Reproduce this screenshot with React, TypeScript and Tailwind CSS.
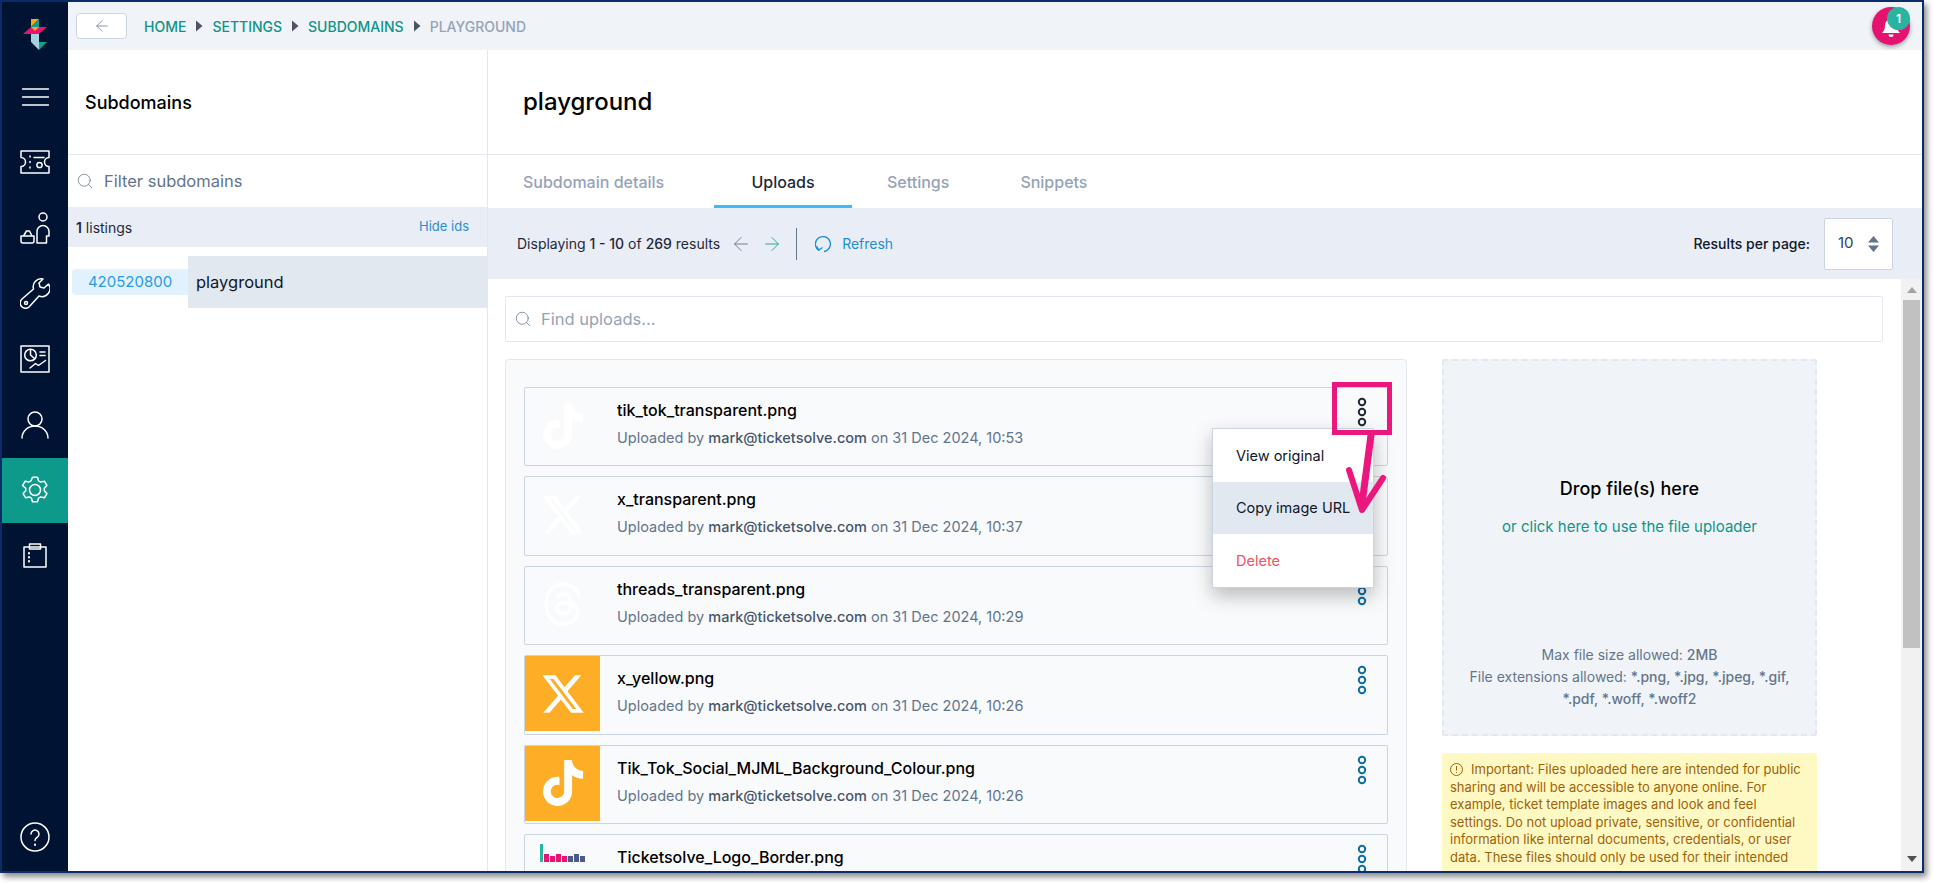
import React from "react";
import { ArrowLeft, ArrowRight, Search } from "lucide-react";
import { FaTiktok, FaXTwitter, FaThreads } from "react-icons/fa6";

const Logo = () => (
  <svg width="24" height="31" viewBox="0 0 24 31">
    <polygon points="8,0 16,0 8,8" fill="#f5a623" />
    <polygon points="16,0 16,8 8,8" fill="#12a08c" />
    <polygon points="0,15 8,8 24,8 16,15" fill="#e8146f" />
    <polygon points="8,8 16,8 12,12" fill="#f5a623" />
    <rect x="8" y="15" width="8" height="8" fill="#a9d0e0" />
    <polygon points="8,23 16,23 16,31" fill="#a9d0e0" />
    <polygon points="16,23 24,23 16,31" fill="#12a08c" />
  </svg>
);

const Ic = ({ children, w = 30, h = 30, vb = "0 0 30 30" }: { children: React.ReactNode; w?: number; h?: number; vb?: string }) => (
  <svg width={w} height={h} viewBox={vb} fill="none" stroke="white" strokeWidth="1.5" strokeLinecap="round" strokeLinejoin="round">
    {children}
  </svg>
);

const Menu = () => (
  <Ic w={27} h={18} vb="0 0 27 18">
    <path d="M0.5 1h26M0.5 9h26M0.5 17h26" />
  </Ic>
);
const Ticket = () => (
  <Ic h={24} vb="0 0 30 24">
    <path d="M1 1h28v6.5a4 4 0 0 0 0 9V23H1v-6.5a4.5 4.5 0 0 0 0-9z" />
    <path d="M10 6v1M10 11.5v1M10 17v1" />
    <circle cx="19.5" cy="15" r="2.6" />
    <path d="M14 7.5h10" />
  </Ic>
);
const Basket = () => (
  <Ic h={32} vb="0 0 30 32">
    <circle cx="23" cy="5" r="4" />
    <path d="M17 31V19.5a6 6 0 0 1 12 0V24h-2.5v7z" />
    <path d="M1 24h13v5a2 2 0 0 1-2 2H3a2 2 0 0 1-2-2zM3.5 24l3-5 3 0 2.5 5" />
  </Ic>
);
const Wrench = () => (
  <Ic h={31} vb="0 0 30 31">
    <path d="M28.5 6l-4.5 4-4-1-1-4 4-4a8 8 0 0 0-9.5 10L2 21a5 5 0 0 0 7 8l10-11a8 8 0 0 0 9.500-12z" />
    <circle cx="6" cy="25" r="1.500" />
  </Ic>
);
const Chart = () => (
  <Ic h={28} vb="0 0 30 28">
    <rect x="1" y="1" width="28" height="26" />
    <circle cx="10.500" cy="10" r="5.800" />
    <path d="M10.500 4.500V10l4 3.500M20 7h5M20 10.500h5M10 23l5.500-4.500 3 2 7-5" />
  </Ic>
);
const User = () => (
  <Ic w={28} h={28} vb="0 0 28 28">
    <circle cx="14" cy="8" r="7" />
    <path d="M1 27a13 12 0 0 1 26 0" />
  </Ic>
);
const Gear = () => (
  <Ic>
    <circle cx="15" cy="15" r="5.500" />
    <path d="M12.500 2.200h5l1 3.600 2.300 1.300 3.600-.9 2.500 4.300-2.600 2.700v2.600l2.600 2.700-2.500 4.300-3.600-.9-2.300 1.300-1 3.600h-5l-1-3.600-2.300-1.300-3.600.9-2.500-4.300 2.600-2.700v-2.600L2.600 10.500l2.500-4.300 3.600.9L11 5.800z" />
  </Ic>
);
const Clip = () => (
  <Ic w={24} h={25} vb="0 0 24 25">
    <rect x="1" y="4" width="22" height="20" />
    <rect x="6.500" y="1" width="11" height="5" />
    <path d="M6 10v.5M6 14v.5M6 18v.5" strokeWidth="2" />
  </Ic>
);
const Help = () => (
  <Ic>
    <circle cx="15" cy="15" r="14" />
    <path d="M11 12a4 4 0 1 1 6 3.500c-1.300.8-2 1.500-2 3" />
    <path d="M15 22.500v.5" strokeWidth="2" />
  </Ic>
);

const nav = [Menu, Ticket, Basket, Wrench, Chart, User, Gear, Clip];

const Dots = ({ dark }: { dark?: boolean }) => (
  <svg width="10" height="30" viewBox="0 0 10 30" fill="none" stroke={dark ? "#1f2937" : "#0f6fa3"} strokeWidth="2">
    <circle cx="5" cy="5" r="3.200" />
    <circle cx="5" cy="15" r="3.200" />
    <circle cx="5" cy="25" r="3.200" />
  </svg>
);

const Tri = () => (
  <svg width="8" height="12" viewBox="0 0 8 12" className="mx-[9px]">
    <polygon points="1,0.500 7.500,6 1,11.500" fill="#4b5563" />
  </svg>
);

const Stamp = () => (
  <div className="flex h-full w-full items-start justify-center pt-[7px]">
    <div className="flex items-end gap-[1px] h-[20px]">
      <span className="h-[18px] w-[3px] bg-[#2bb5a0]" />
      <span className="h-[8px] w-[5px] bg-[#e8146f]" />
      <span className="h-[6px] w-[5px] bg-[#e8146f]" />
      <span className="h-[8px] w-[5px] bg-[#e8146f]" />
      <span className="h-[6px] w-[5px] bg-[#e8146f]" />
      <span className="h-[6px] w-[5px] bg-[#4b5b8c]" />
      <span className="h-[8px] w-[5px] bg-[#4b5b8c]" />
      <span className="h-[6px] w-[5px] bg-[#4b5b8c]" />
    </div>
  </div>
);

const rows = [
  { name: "tik_tok_transparent.png", time: "10:53", icon: <FaTiktok className="text-white" size={46} />, bg: "", dark: true },
  { name: "x_transparent.png", time: "10:37", icon: <FaXTwitter className="text-white" size={46} />, bg: "" },
  { name: "threads_transparent.png", time: "10:29", icon: <FaThreads className="text-white" size={46} />, bg: "" },
  { name: "x_yellow.png", time: "10:26", icon: <FaXTwitter className="text-white" size={46} />, bg: "bg-[#fdad26]" },
  { name: "Tik_Tok_Social_MJML_Background_Colour.png", time: "10:26", icon: <FaTiktok className="text-white" size={46} />, bg: "bg-[#fdad26]" },
  { name: "Ticketsolve_Logo_Border.png", time: "10:25", icon: <Stamp />, bg: "" },
];

export default function App() {
  return (
    <div className="relative h-[883px] w-[1934px] overflow-hidden bg-white font-['Inter','Liberation_Sans',sans-serif] text-[#0f172a]">
      <div className="relative flex h-[873px] w-[1924px] border-2 border-[#0a2d6a] shadow-[3px_4px_6px_rgba(0,0,0,0.45)]">
        {/* sidebar */}
        <aside className="flex w-[66px] shrink-0 flex-col bg-[#011333]">
          <div className="flex h-[62px] shrink-0 items-center justify-center pt-[2px]">
            <Logo />
          </div>
          {nav.map((I, i) => (
            <div key={i} className={`flex h-[65.6px] shrink-0 items-center justify-center ${i === 6 ? "bg-[#0e9a8a]" : ""}`}>
              <I />
            </div>
          ))}
          <div className="mt-auto flex justify-center pb-[19px]">
            <Help />
          </div>
        </aside>

        <div className="flex min-w-0 flex-1 flex-col">
          {/* top bar */}
          <header className="flex h-[48px] shrink-0 items-center bg-[#f0f3f8] pl-[8px]">
            <div className="flex h-[26px] w-[51px] items-center justify-center rounded-[4px] border border-[#cbd5e1] bg-white">
              <ArrowLeft size={18} strokeWidth={1} color="#64748b" />
            </div>
            <nav className="ml-[17px] flex items-center text-[14px] font-medium uppercase text-[#0e9488]">
              <span>Home</span>
              <Tri />
              <span>Settings</span>
              <Tri />
              <span>Subdomains</span>
              <Tri />
              <span className="text-[#94a3b8]">Playground</span>
            </nav>
          </header>

          <div className="flex min-h-0 flex-1">
            {/* left panel */}
            <section className="flex w-[420px] shrink-0 flex-col border-r border-[#e2e8f0]">
              <div className="flex h-[105px] shrink-0 items-center border-b border-[#e2e8f0] pl-[17px] text-[18px] font-medium text-black">Subdomains</div>
              <div className="flex h-[52px] shrink-0 items-center gap-[10px] pl-[8px] text-[16.500px] text-[#64748b]">
                <Search size={18} strokeWidth={1} color="#64748b" className="shrink-0" />
                <span>Filter subdomains</span>
              </div>
              <div className="flex h-[40px] shrink-0 items-center justify-between bg-[#e9edf5] pl-[8px] pr-[18px]">
                <span className="text-[14px] text-[#1e293b]"><b className="font-semibold">1</b> listings</span>
                <span className="text-[13px] text-[#2b8fd0]">Hide ids</span>
              </div>
              <div className="mt-[9px] flex h-[52px] items-center">
                <span className="ml-[4px] flex h-[26px] w-[116px] items-center justify-center rounded-l-[4px] bg-[#e1f2fe] text-[15px] text-[#2b9be0]">420520800</span>
                <span className="flex h-full flex-1 items-center bg-[#e2e8f0] pl-[8px] text-[16.500px] text-[#0f172a]">playground</span>
              </div>
            </section>

            {/* right panel */}
            <section className="flex min-w-0 flex-1 flex-col">
              <div className="flex h-[105px] shrink-0 items-center border-b border-[#e2e8f0] pl-[35px] text-[24px] font-medium text-black">playground</div>
              <div className="flex h-[53px] shrink-0 pl-[0px] text-[16px] font-medium text-[#94a3b8]">
                <div className="flex w-[226px] items-center pl-[35px]">Subdomain details</div>
                <div className="flex w-[138px] items-center justify-center border-b-[3px] border-[#38bdf8] pt-[3px] text-[#1e293b]">Uploads</div>
                <div className="ml-[35px] flex items-center">Settings</div>
                <div className="ml-[71px] flex items-center">Snippets</div>
              </div>
              <div className="flex h-[71px] shrink-0 items-center bg-[#e9edf5] pl-[29px] pr-[29px]">
                <span className="text-[14px] text-[#1e293b]">Displaying <b className="font-medium">1 - 10</b> of <b className="font-medium">269</b> results</span>
                <ArrowLeft className="ml-[10px]" size={22} strokeWidth={1} color="#64748b" />
                <ArrowRight className="ml-[9px]" size={22} strokeWidth={1} color="#14a58f" />
                <span className="ml-[13px] h-[32px] w-px bg-[#64748b]" />
                <svg className="ml-[18px]" width="18" height="18" viewBox="0 0 18 18" fill="none" stroke="#1d8fd0" strokeWidth="1.300">
                  <path d="M4 15.500A7.500 7.500 0 1 1 9 16.500" />
                  <path d="M1.500 11.500L4 15l3.500-2.500" />
                </svg>
                <span className="ml-[9px] text-[14px] text-[#1d8fd0]">Refresh</span>
                <span className="ml-auto text-[14px] font-medium text-[#0f172a]">Results per page:</span>
                <div className="ml-[14px] flex h-[52px] w-[69px] items-center justify-between rounded-[2px] border border-[#cbd5e1] bg-white pl-[13px] pr-[13px]">
                  <span className="text-[15px] text-[#334155]">10</span>
                  <svg width="11" height="16" viewBox="0 0 11 16" fill="#64748b">
                    <polygon points="5.500,0 11,6.500 0,6.500" />
                    <polygon points="5.500,16 11,9.500 0,9.500" />
                  </svg>
                </div>
              </div>

              <div className="flex min-h-0 flex-1">
                <div className="min-w-0 flex-1 overflow-hidden pl-[17px] pr-[18px] pt-[17px]">
                  <div className="flex h-[46px] items-center gap-[9px] rounded-[2px] border border-[#e2e8f0] pl-[8px] text-[16.500px] text-[#94a3b8]">
                    <Search size={18} strokeWidth={1} color="#64748b" />
                    <span>Find uploads...</span>
                  </div>
                  <div className="mt-[17px] flex gap-[35px]">
                    <div className="w-[902px] shrink-0 rounded-[4px] border border-[#e2e8f0] bg-[#f8fafc] px-[18px] pt-[27px]">
                      {rows.map((r) => (
                        <div key={r.name} className="mb-[10px] flex h-[79.400px] rounded-[2px] border border-[#cbd5e1] pr-[20px]">
                          <div className={`flex h-[75px] w-[75px] shrink-0 items-center justify-center ${r.bg}`}>{r.icon}</div>
                          <div className="ml-[17px] min-w-0 flex-1 pt-[10px]">
                            <div className="text-[16px] font-medium leading-[24px] text-black">{r.name}</div>
                            <div className="mt-[5px] text-[14.500px] leading-[22px] text-[#64748b]">
                              Uploaded by <span className="font-medium text-[#475569]">mark@ticketsolve.com</span> on 31 Dec 2024, {r.time}
                            </div>
                          </div>
                          <div className="pt-[9px]">
                            <Dots dark={r.dark} />
                          </div>
                        </div>
                      ))}
                    </div>
                    <div className="w-[375px] shrink-0">
                      <div className="flex h-[377px] flex-col items-center rounded-[2px] border-2 border-dashed border-[#e2e8f0] bg-[#f0f4f9] px-[20px] pt-[114px] text-center">
                        <div className="text-[18px] font-medium text-black">Drop file(s) here</div>
                        <div className="mt-[14px] text-[15px] text-[#0e9488]">or click here to use the file uploader</div>
                        <div className="mt-auto pb-[24px] text-[14px] leading-[22px] text-[#64748b]">
                          <div>Max file size allowed: <b className="font-medium">2MB</b></div>
                          <div>File extensions allowed: <b className="font-medium">*.png, *.jpg, *.jpeg, *.gif, *.pdf, *.woff, *.woff2</b></div>
                        </div>
                      </div>
                      <div className="mt-[17px] rounded-[2px] bg-[#fef9c3] px-[8px] pt-[8px] pb-[8px] text-[13px] leading-[17.500px] text-[#a16207]">
                        <svg className="mb-[2px] mr-[8px] inline-block" width="13" height="13" viewBox="0 0 13 13" fill="none" stroke="#a16207" strokeWidth="1">
                          <circle cx="6.500" cy="6.500" r="6" />
                          <path d="M6.500 3v4.500M6.500 9v1" />
                        </svg>
                        Important: Files uploaded here are intended for public sharing and will be accessible to anyone online. For example, ticket template images and look and feel settings. Do not upload private, sensitive, or confidential information like internal documents, credentials, or user data. These files should only be used for their intended purpose.
                      </div>
                    </div>
                  </div>
                </div>
                {/* scrollbar */}
                <div className="relative flex w-[21px] shrink-0 flex-col items-center bg-[#f1f1f1]">
                  <svg className="mt-[8px]" width="10" height="6" viewBox="0 0 10 6" fill="#a3a3a3"><polygon points="5,0 10,6 0,6" /></svg>
                  <div className="mt-[7px] h-[348px] w-[17px] bg-[#c1c1c1]" />
                  <svg className="mb-[9px] mt-auto" width="10" height="6" viewBox="0 0 10 6" fill="#505050"><polygon points="5,6 10,0 0,0" /></svg>
                </div>
              </div>
            </section>
          </div>
        </div>

        {/* bell */}
        <div className="absolute left-[1870px] top-[5px] h-[38px] w-[38px] rounded-full bg-[#e6126f] shadow-[0_2px_4px_rgba(0,0,0,0.35)]">
          <svg className="absolute left-[9px] top-[11px]" width="20" height="20" viewBox="0 0 20 20" fill="white">
            <path d="M10 1a6 6 0 0 0-6 6c0 4-1 6-3 8h18c-2-2-3-4-3-8a6 6 0 0 0-6-6zM7.500 16.500a2.500 2.500 0 0 0 5 0z" />
          </svg>
          <div className="absolute left-[15px] top-0 flex h-[23px] w-[23px] items-center justify-center rounded-full bg-[#2ab39f] text-[12px] font-semibold text-white">1</div>
        </div>

        {/* context menu */}
        <div className="absolute left-[1210px] top-[426px] w-[162px] border border-[#cbd5e1] bg-white text-[14.500px] shadow-[0_8px_18px_rgba(0,0,0,0.25)]">
          <div className="flex h-[53px] items-center pl-[23px] text-[#0f172a]">View original</div>
          <div className="flex h-[52px] items-center bg-[#e2e8f0] pl-[23px] text-[#0f172a]">Copy image URL</div>
          <div className="flex h-[53px] items-center pl-[23px] text-[#f0525f]">Delete</div>
        </div>

        {/* annotation */}
        <div className="absolute left-[1330px] top-[380px] h-[53px] w-[60px] border-[5px] border-[#ec177c]" />
        <svg className="absolute left-[1340px] top-[430px]" width="50" height="85" viewBox="0 0 50 85" fill="none" stroke="#ec177c" strokeLinecap="round" strokeLinejoin="round">
          <path d="M29 3L20 72" strokeWidth="7" />
          <path d="M7 38L20 78L41 46" strokeWidth="6" />
        </svg>
      </div>
    </div>
  );
}
